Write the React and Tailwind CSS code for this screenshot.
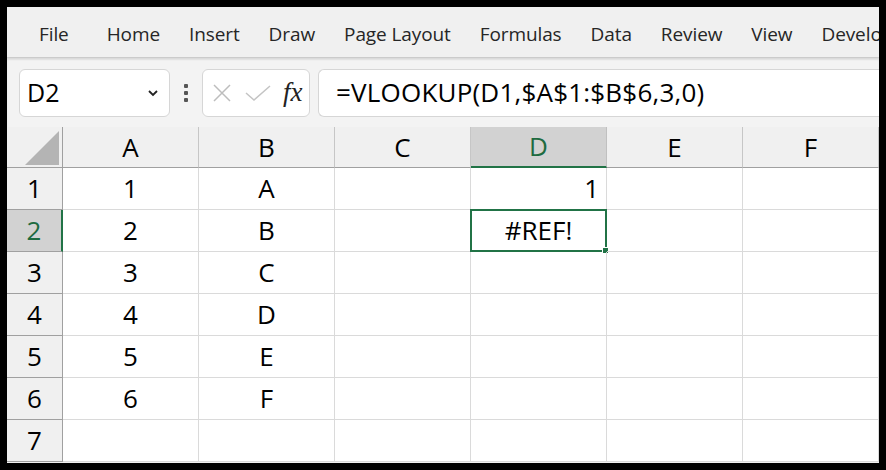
import React from 'react';

const MENU = ['File', 'Home', 'Insert', 'Draw', 'Page Layout', 'Formulas', 'Data', 'Review', 'View', 'Developer'];
const COLS = ['A', 'B', 'C', 'D', 'E', 'F'];
const ROWS = [
  ['1', 'A', '', '1', '', ''],
  ['2', 'B', '', '#REF!', '', ''],
  ['3', 'C', '', '', '', ''],
  ['4', 'D', '', '', '', ''],
  ['5', 'E', '', '', '', ''],
  ['6', 'F', '', '', '', ''],
  ['', '', '', '', '', ''],
];

function FormulaBar() {
  return (
    <div className="flex items-center h-[70px] bg-[#f3f3f3] pl-[12px] border-t border-[#dcdcdc] shadow-[inset_0_2px_2px_rgba(0,0,0,0.06)]">
      <div className="flex items-center justify-between w-[151px] h-[48px] bg-white border border-[#d6d6d6] rounded-[6px] pl-[7px] pr-[10px]">
        <span className="text-[25px] text-black">D2</span>
        <svg width="12" height="8" viewBox="0 0 12 8">
          <path d="M2 2 L6 6 L10 2" fill="none" stroke="#222" strokeWidth="1.8" />
        </svg>
      </div>
      <div className="flex flex-col gap-[3px] w-[32px] items-center">
        <span className="w-[4px] h-[4px] bg-[#555] rounded-[1px]" />
        <span className="w-[4px] h-[4px] bg-[#555] rounded-[1px]" />
        <span className="w-[4px] h-[4px] bg-[#555] rounded-[1px]" />
      </div>
      <div className="flex items-center w-[108px] h-[48px] bg-white border border-[#d6d6d6] rounded-[6px] pl-[9px]">
        <svg width="20" height="20" viewBox="0 0 20 20">
          <path d="M2 2 L18 18 M18 2 L2 18" stroke="#bdbdbd" strokeWidth="1.5" />
        </svg>
        <svg className="ml-[13px]" width="26" height="18" viewBox="0 0 26 18">
          <path d="M1 9 L9 16 L25 2" fill="none" stroke="#c4c4c4" strokeWidth="1.5" />
        </svg>
        <span className="ml-[12px] text-[27px] leading-none italic text-[#222]" style={{ fontFamily: '"Liberation Serif", serif' }}>
          fx
        </span>
      </div>
      <div className="flex items-center flex-1 h-[48px] ml-[8px] bg-white border border-r-0 border-[#d6d6d6] rounded-l-[6px] pl-[17px]">
        <span className="text-[26px] text-black tracking-[0.2px]">=VLOOKUP(D1,$A$1:$B$6,3,0)</span>
      </div>
    </div>
  );
}

function Grid() {
  return (
    <div className="grid grid-cols-[56px_repeat(6,136px)] grid-rows-[41px_repeat(7,42px)] bg-white">
      <div className="bg-[#f0f0f0] border-b border-r border-[#a0a0a0] flex items-end justify-end pr-[3px] pb-[2px]">
        <svg width="34" height="34" viewBox="0 0 34 34">
          <polygon points="34,0 34,34 0,34" fill="#b4b4b4" />
        </svg>
      </div>
      {COLS.map((c) => (
        <div
          key={c}
          className={
            c === 'D'
              ? 'flex items-center justify-center bg-[#d2d2d2] border-b-2 border-[#217346] border-r border-r-[#c0c0c0] text-[#1e6b40] text-[26px]'
              : 'flex items-center justify-center bg-[#f0f0f0] border-b border-[#a0a0a0] border-r border-r-[#c6c6c6] text-black text-[26px]'
          }
        >
          {c}
        </div>
      ))}
      {ROWS.map((row, i) => (
        <React.Fragment key={i}>
          <div
            className={
              i === 1
                ? 'flex items-center justify-center bg-[#d2d2d2] border-r-2 border-r-[#217346] border-b border-[#a0a0a0] text-[#1e6b40] text-[26px]'
                : 'flex items-center justify-center bg-[#f0f0f0] border-r border-b border-[#a0a0a0] text-black text-[26px]'
            }
          >
            {i + 1}
          </div>
          {row.map((v, j) => (
            <div
              key={j}
              className={
                'relative flex items-center border-r border-b border-[#dadada] text-[26px] text-black px-[7px] ' +
                (i === 0 && j === 3 ? 'justify-end' : 'justify-center')
              }
            >
              {v}
              {i === 1 && j === 3 && (
                <div className="absolute -left-[1px] -top-[1px] -right-[1px] -bottom-[1px] border-2 border-[#217346]">
                  <div className="absolute -right-[4px] -bottom-[4px] w-[7px] h-[7px] bg-[#217346] border border-white" />
                </div>
              )}
            </div>
          ))}
        </React.Fragment>
      ))}
    </div>
  );
}

export default function App() {
  return (
    <div className="w-[886px] h-[470px] bg-black p-[7px] overflow-hidden" style={{ fontFamily: '"Open Sans", "Noto Sans", sans-serif' }}>
      <div className="w-[872px] h-[456px] overflow-hidden bg-[#f0f0f0] flex flex-col">
        <div className="flex items-center h-[50px] shrink-0 bg-[#f0f0f0] pl-[32px] pt-[4px] gap-[29px] text-[19px] tracking-[-0.1px] text-[#262626] whitespace-nowrap shadow-[0_1px_3px_rgba(0,0,0,0.12)] relative z-10">
          {MENU.map((m, i) => (
            <span key={m} className={i === 1 ? 'ml-[9px]' : ''}>
              {m}
            </span>
          ))}
        </div>
        <FormulaBar />
        <Grid />
      </div>
    </div>
  );
}
